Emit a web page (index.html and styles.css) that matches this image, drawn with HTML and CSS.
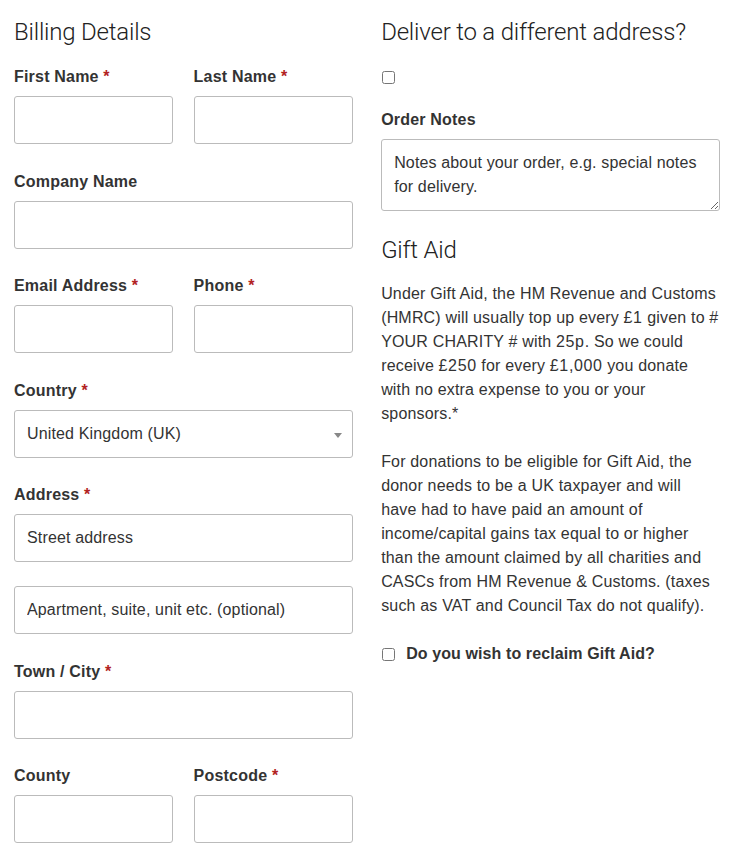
FILE: index.html
```html
<!DOCTYPE html>
<html lang="en">
<head>
<meta charset="utf-8">
<title>Checkout</title>
<link rel="stylesheet" href="styles.css">
</head>
<body>
<form class="checkout">
  <div class="col">
    <h3 class="heading">Billing Details</h3>
    <div class="pair">
      <div class="field">
        <label class="label">First Name <abbr class="req">*</abbr></label>
        <input class="input" type="text">
      </div>
      <div class="field">
        <label class="label">Last Name <abbr class="req">*</abbr></label>
        <input class="input" type="text">
      </div>
    </div>
    <div class="field">
      <label class="label">Company Name</label>
      <input class="input" type="text">
    </div>
    <div class="pair">
      <div class="field">
        <label class="label">Email Address <abbr class="req">*</abbr></label>
        <input class="input" type="text">
      </div>
      <div class="field">
        <label class="label">Phone <abbr class="req">*</abbr></label>
        <input class="input" type="text">
      </div>
    </div>
    <div class="field">
      <label class="label">Country <abbr class="req">*</abbr></label>
      <div class="select">United Kingdom (UK)</div>
    </div>
    <div class="field field-tight">
      <label class="label">Address <abbr class="req">*</abbr></label>
      <input class="input" type="text" placeholder="Street address">
    </div>
    <div class="field">
      <input class="input" type="text" placeholder="Apartment, suite, unit etc. (optional)">
    </div>
    <div class="field">
      <label class="label">Town / City <abbr class="req">*</abbr></label>
      <input class="input" type="text">
    </div>
    <div class="pair">
      <div class="field">
        <label class="label">County</label>
        <input class="input" type="text">
      </div>
      <div class="field">
        <label class="label">Postcode <abbr class="req">*</abbr></label>
        <input class="input" type="text">
      </div>
    </div>
  </div>
  <div class="col">
    <h3 class="heading">Deliver to a different address?</h3>
    <div class="toggle"><input class="check" type="checkbox"></div>
    <div class="field field-notes">
      <label class="label">Order Notes</label>
      <textarea class="notes" placeholder="Notes about your order, e.g. special notes for delivery."></textarea>
    </div>
    <h3 class="heading">Gift Aid</h3>
    <p class="text">Under Gift Aid, the HM Revenue and Customs (HMRC) will usually top up every <span class="amt">£1</span> given to # YOUR CHARITY # with <span class="amt">25p</span>. So we could receive <span class="amt">£250</span> for every <span class="amt">£1,000</span> you donate with no extra expense to you or your sponsors.*</p>
    <p class="text">For donations to be eligible for Gift Aid, the donor needs to be a UK taxpayer and will have had to have paid an amount of income/capital gains tax equal to or higher than the amount claimed by all charities and CASCs from HM Revenue &amp; Customs. (taxes such as VAT and Council Tax do not qualify).</p>
    <label class="reclaim"><input class="check" type="checkbox"><span>Do you wish to reclaim Gift Aid?</span></label>
  </div>
</form>
</body>
</html>
```

FILE: styles.css
```css
html, body {
  margin: 0;
  padding: 0;
  background: #fff;
}
body {
  font-family: "Liberation Sans", Arial, sans-serif;
  font-size: 16px;
  line-height: 24px;
  color: #333;
}
.checkout {
  display: grid;
  grid-template-columns: 48% 48%;
  justify-content: space-between;
  padding: 16px 14px 0;
}
.col {
  display: flex;
  flex-direction: column;
}
.heading {
  margin: 0 0 16px;
  font-family: "Roboto", "Liberation Sans", sans-serif;
  font-weight: 300;
  font-size: 24px;
  line-height: 32px;
  letter-spacing: -0.2px;
  color: #222;
}
.pair {
  display: grid;
  grid-template-columns: 47% 47%;
  justify-content: space-between;
}
.field {
  display: flex;
  flex-direction: column;
  gap: 7px;
  margin-bottom: 24.5px;
}
.field-tight {
  margin-bottom: 24px;
}
.field-notes {
  margin-bottom: 23px;
}
.label {
  padding-top: 1px;
  font-weight: 700;
  font-size: 16px;
  line-height: 24px;
  letter-spacing: 0.2px;
  color: #333;
}
.req {
  color: #b22222;
  text-decoration: none;
  border: 0;
  font-weight: 700;
}
.input, .select, .notes {
  box-sizing: border-box;
  width: 100%;
  border: 1px solid #bbb;
  border-radius: 3px;
  background: #fff;
  font-family: "Liberation Sans", Arial, sans-serif;
  font-size: 16px;
  letter-spacing: 0.15px;
  color: #333;
  margin: 0;
}
.input {
  height: 48px;
  padding: 0 12px;
}
.input::placeholder, .notes::placeholder {
  color: #333;
  opacity: 1;
}
.select {
  position: relative;
  height: 48px;
  padding: 0 12px;
  display: flex;
  align-items: center;
}
.select::after {
  content: "";
  position: absolute;
  right: 10px;
  top: 22px;
  border-style: solid;
  border-width: 5px 4px 0 4px;
  border-color: #888 transparent transparent transparent;
}
.toggle {
  height: 24px;
  display: flex;
  align-items: center;
  margin: 1px 0 18px;
}
.check {
  width: 13px;
  height: 13px;
  margin: 0 0 0 1px;
}
.notes {
  display: block;
  height: 72px;
  padding: 11px 12px;
  line-height: 24px;
  resize: vertical;
}
.text {
  margin: 0 0 24px;
  letter-spacing: 0.18px;
}
.amt {
  letter-spacing: 0.63px;
}
.reclaim {
  display: flex;
  align-items: center;
  gap: 11px;
  font-weight: 700;
  line-height: 24px;
  letter-spacing: 0.1px;
}
```
